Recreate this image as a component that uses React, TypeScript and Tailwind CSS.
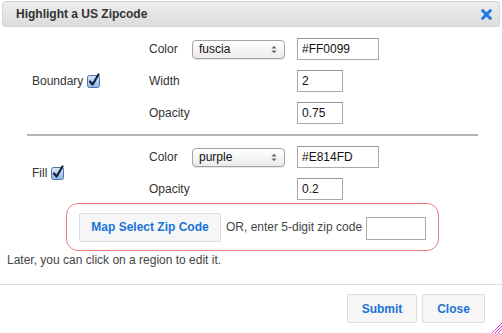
import React from 'react';

// small Mac-style checked checkbox
function Check() {
    return (
        <svg width="15" height="15" viewBox="0 0 15 15" className="inline-block">
            <defs>
                <linearGradient id="cb" x1="0" y1="0" x2="0" y2="1">
                    <stop offset="0" stopColor="#d8e9fb" />
                    <stop offset="1" stopColor="#8fb7e6" />
                </linearGradient>
            </defs>
            <rect x="1.5" y="2.5" width="12" height="12" rx="2" fill="url(#cb)" stroke="#4f74a6" />
            <path d="M4 8.5 L6.6 11.5 L12.5 1.5" fill="none" stroke="#13203c" strokeWidth="2.2" strokeLinecap="round" strokeLinejoin="round" />
        </svg>
    );
}

function FakeSelect({ value }: { value: string }) {
    return (
        <div className="flex h-[19px] w-[93px] items-center justify-between rounded-[4px] border border-[#a3a3a3] bg-gradient-to-b from-white to-[#ebebeb] pl-[6px] pr-[7px] text-[12px] text-[#111] shadow-[0_1px_0_#e8e8e8]">
            <span>{value}</span>
            <svg width="6" height="9" viewBox="0 0 6 9">
                <path d="M0.5 3.5 L3 0.8 L5.5 3.5 Z M0.5 5.5 L3 8.2 L5.5 5.5 Z" fill="#666" />
            </svg>
        </div>
    );
}

function TextBox({ value, w }: { value: string; w: string }) {
    return (
        <div className={`flex h-[22px] ${w} items-center border border-[#aaaaaa] border-t-[#999] bg-white px-[4px] text-[12px] text-[#111]`}>
            {value}
        </div>
    );
}

function Label({ children }: { children: React.ReactNode }) {
    return <div className="flex h-8 items-center text-[12px] text-[#333]">{children}</div>;
}

const blueBtn = "flex h-[29px] items-center justify-center rounded-[2px] border border-[#dcdcdc] bg-[#f6f6f6] text-[12px] font-bold text-[#1a73d9]";

export default function App() {
    return (
        <div className="relative h-[333px] w-[502px] overflow-hidden bg-white font-['Liberation_Sans',Arial,sans-serif]">
            {/* Title bar */}
            <div className="mx-[2px] mt-[1px] flex h-[26px] items-center justify-between rounded-[3px] border border-[#d4d4d4] bg-gradient-to-b from-[#ededed] to-[#dcdcdc] pl-[13px] pr-[7px]">
                <span className="text-[12px] font-bold text-[#333]">Highlight a US Zipcode</span>
                <svg width="11" height="11" viewBox="0 0 11 11">
                    <path d="M1.8 1.8 L9.2 9.2 M9.2 1.8 L1.8 9.2" stroke="#1a7ae6" strokeWidth="3" strokeLinecap="square" />
                </svg>
            </div>

            {/* Boundary */}
            <div className="mt-[6px] flex">
                <div className="flex w-[149px] items-center pl-[32px] text-[12px] text-[#333]">
                    Boundary<span className="ml-[3px] -mt-[2px]"><Check /></span>
                </div>
                <div className="grid grid-cols-[43px_105px_auto] items-center">
                    <Label>Color</Label>
                    <FakeSelect value="fuscia" />
                    <TextBox value="#FF0099" w="w-[82px]" />
                    <Label>Width</Label>
                    <div />
                    <TextBox value="2" w="w-[46px]" />
                    <Label>Opacity</Label>
                    <div />
                    <TextBox value="0.75" w="w-[46px]" />
                </div>
            </div>

            <div className="mx-[27px] mt-[5px] mb-[5px] h-[2px] w-[451px] bg-[#b4b4b4]" />

            {/* Fill */}
            <div className="flex">
                <div className="flex w-[149px] items-center pl-[32px] text-[12px] text-[#333]">
                    Fill<span className="ml-[3px] -mt-[2px]"><Check /></span>
                </div>
                <div className="grid grid-cols-[43px_105px_auto] items-center">
                    <Label>Color</Label>
                    <FakeSelect value="purple" />
                    <TextBox value="#E814FD" w="w-[82px]" />
                    <Label>Opacity</Label>
                    <div />
                    <TextBox value="0.2" w="w-[46px]" />
                </div>
            </div>

            {/* Zip selection box */}
            <div className="-mt-[2px] ml-[66px] flex h-[48px] w-[373px] items-center rounded-[12px] border border-[#f07a7a] pl-[12px]">
                <div className={`${blueBtn} w-[142px]`}>Map Select Zip Code</div>
                <span className="ml-[5px] text-[12px] text-[#444]">OR, enter 5-digit zip code</span>
                <div className="ml-[4px] mt-[2px] h-[23px] w-[60px] border border-[#aaaaaa] bg-white" />
            </div>

            <p className="mt-px pl-[7px] text-[12px] leading-4 text-[#444]">Later, you can click on a region to edit it.</p>

            <div className="mt-[16px] h-px w-full bg-[#dddddd]" />

            <div className="mt-[9px] flex justify-end gap-[5px] pr-[17px]">
                <div className={`${blueBtn} w-[70px]`}>Submit</div>
                <div className={`${blueBtn} w-[63px]`}>Close</div>
            </div>

            {/* resize grip */}
            <svg className="absolute bottom-0 right-0" width="11" height="11" viewBox="0 0 11 11">
                <path d="M1 11 L11 1 M4 11 L11 4 M7 11 L11 7" stroke="#e83cc8" strokeWidth="1" />
            </svg>
        </div>
    );
}
